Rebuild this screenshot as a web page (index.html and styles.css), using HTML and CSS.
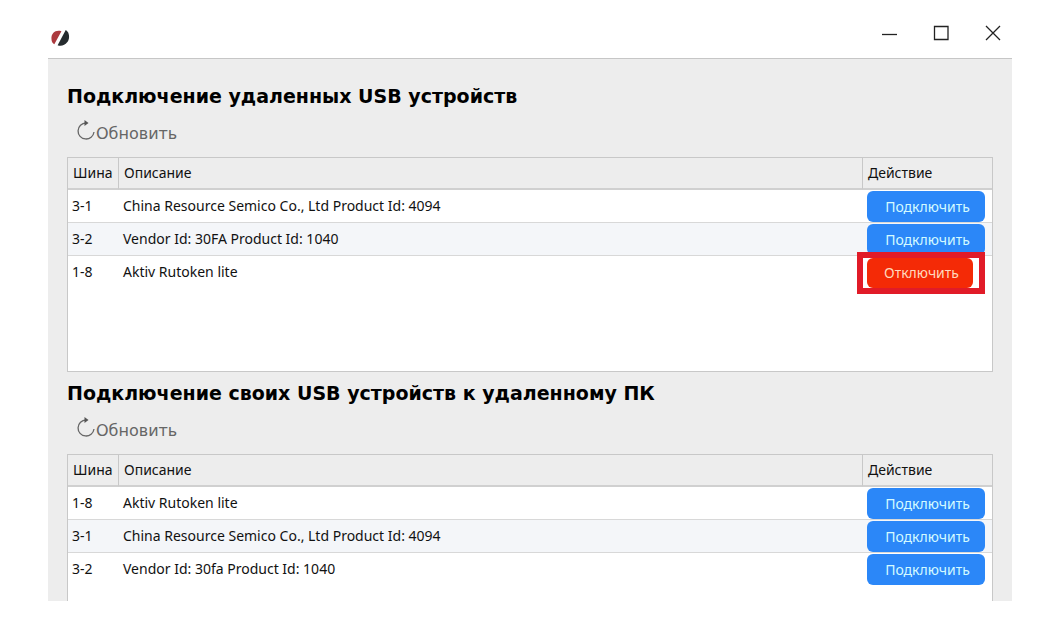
FILE: index.html
```html
<!DOCTYPE html>
<html lang="ru">
<head>
<meta charset="utf-8">
<meta name="viewport" content="width=device-width, initial-scale=1.0">
<title>USB устройства</title>
<link rel="stylesheet" href="styles.css">
</head>
<body>
  <div class="window">
    <header class="titlebar">
      <svg class="logo" viewBox="0 0 20 18" aria-hidden="true">
        <path d="M11 2 C5 0 0 4 0.5 10 C0.5 13 2 15 3.5 15.5 Z" fill="#ac3a3e"/>
        <path d="M15.5 0.5 C19.5 3 20 9 17.5 13 C14.5 17 10 18 7 16.5 Z" fill="#252b2e"/>
      </svg>
      <div class="window-buttons">
        <button type="button" aria-label="Свернуть"><svg viewBox="0 0 16 16"><path d="M1 9.5H16"/></svg></button>
        <button type="button" aria-label="Развернуть"><svg viewBox="0 0 16 16"><path d="M1.5 1.5H15V14.5H1.5Z"/></svg></button>
        <button type="button" aria-label="Закрыть"><svg viewBox="0 0 16 16"><path d="M1 1L15 15M15 1L1 15"/></svg></button>
      </div>
    </header>

    <main>
      <section class="remote">
        <h2>Подключение удаленных USB устройств</h2>
        <button type="button" class="refresh">
          <svg viewBox="0 0 20 20" aria-hidden="true"><path d="M10 3A8 8 0 1 0 18 12" fill="none" stroke="#666" stroke-width="1.3"/><path d="M8.5 0L12.5 3L8.500 6Z" fill="#555"/></svg>
          <span>Обновить</span>
        </button>
        <div class="list">
          <table>
            <thead>
              <tr><th class="bus">Шина</th><th>Описание</th><th class="action">Действие</th></tr>
            </thead>
            <tbody>
              <tr><td>3-1</td><td>China Resource Semico Co., Ltd Product Id: 4094</td><td><button type="button" class="btn">Подключить</button></td></tr>
              <tr><td>3-2</td><td>Vendor Id: 30FA Product Id: 1040</td><td><button type="button" class="btn">Подключить</button></td></tr>
              <tr><td>1-8</td><td>Aktiv Rutoken lite</td><td><div class="marked"><button type="button" class="btn btn-off">Отключить</button></div></td></tr>
            </tbody>
          </table>
        </div>
      </section>

      <section class="local">
        <h2>Подключение своих USB устройств к удаленному ПК</h2>
        <button type="button" class="refresh">
          <svg viewBox="0 0 20 20" aria-hidden="true"><path d="M10 3A8 8 0 1 0 18 12" fill="none" stroke="#666" stroke-width="1.3"/><path d="M8.5 0L12.5 3L8.500 6Z" fill="#555"/></svg>
          <span>Обновить</span>
        </button>
        <div class="list">
          <table>
            <thead>
              <tr><th class="bus">Шина</th><th>Описание</th><th class="action">Действие</th></tr>
            </thead>
            <tbody>
              <tr><td>1-8</td><td>Aktiv Rutoken lite</td><td><button type="button" class="btn">Подключить</button></td></tr>
              <tr><td>3-1</td><td>China Resource Semico Co., Ltd Product Id: 4094</td><td><button type="button" class="btn">Подключить</button></td></tr>
              <tr><td>3-2</td><td>Vendor Id: 30fa Product Id: 1040</td><td><button type="button" class="btn">Подключить</button></td></tr>
            </tbody>
          </table>
        </div>
      </section>
    </main>
  </div>
</body>
</html>
```
FILE: styles.css
```css
* {
  box-sizing: border-box;
}
body {
  margin: 0;
  padding: 0 41px 25px 48px;
  min-height: 100vh;
  display: flex;
  background-color: #fff;
  color: #111;
  font-family: "Noto Sans", sans-serif;
  font-size: 14px;
}
button {
  font-family: inherit;
  border: none;
  background: none;
  padding: 0;
  cursor: pointer;
}
.window {
  flex: 1;
  display: flex;
  flex-direction: column;
}

.titlebar {
  display: flex;
  justify-content: space-between;
  align-items: center;
  padding: 16px 11px 8px 3px;
  border-bottom: 1px solid #c6c6c6;
}
.logo {
  width: 19px;
  height: 18px;
  margin-top: 9px;
}
.window-buttons {
  display: flex;
  gap: 36px;
}
.window-buttons button {
  height: 34px;
}
.window-buttons svg {
  display: block;
  width: 16px;
  height: 16px;
  fill: none;
  stroke: #222;
  stroke-width: 1.3;
}

main {
  flex: 1;
  display: flex;
  flex-direction: column;
  background-color: #ededed;
  padding: 21px 19px 0;
}
section {
  display: flex;
  flex-direction: column;
}
.local {
  flex: 1;
  padding-top: 5px;
}
h2 {
  margin: 0;
  font-family: "DejaVu Sans", sans-serif;
  font-size: 19px;
  line-height: 32px;
  color: #000;
}
.refresh {
  display: flex;
  align-self: flex-start;
  height: 45px;
  padding: 8px 9px 0;
  color: #666;
  font-family: "DejaVu Sans", sans-serif;
  font-size: 16px;
  line-height: 28px;
}
.refresh svg {
  width: 20px;
  height: 20px;
}

.list {
  background-color: #fff;
  border: 1px solid #c8c8c8;
}
.remote .list {
  height: 215px;
}
.local .list {
  flex: 1;
  border-bottom: none;
}
table {
  width: 100%;
  table-layout: fixed;
  border-collapse: separate;
  border-spacing: 0;
}
th {
  height: 32px;
  padding: 0 5px 1px;
  background-color: #ededed;
  border-right: 1px solid #c8c8c8;
  border-bottom: 2px solid #d0d0d0;
  font-weight: normal;
  text-align: left;
}
th:last-child {
  border-right: none;
}
.bus {
  width: 51px;
}
.action {
  width: 129px;
}
td {
  height: 33px;
  padding: 0 4px 1px;
  border-bottom: 1px solid #d8d8d8;
}
td:last-child {
  padding: 1px 4px 0;
}
tbody tr:nth-child(even) {
  background-color: #f4f6f9;
}
tbody tr:last-child td {
  border-bottom-color: transparent;
}

.btn {
  display: block;
  width: 118px;
  height: 31px;
  padding-left: 3px;
  border-radius: 6px;
  background-color: #2b87f8;
  color: #d3faff;
  font-size: 14px;
}
.btn-off {
  width: 106px;
  height: 30px;
  background-color: #f42a06;
  color: #ffd9bd;
}
.marked {
  position: relative;
}
/* frame laid over the cell */
.marked::after {
  content: "";
  position: absolute;
  inset: -6px 3px -6px -10px;
  border: 6px solid #e11b28;
  pointer-events: none;
}
```
